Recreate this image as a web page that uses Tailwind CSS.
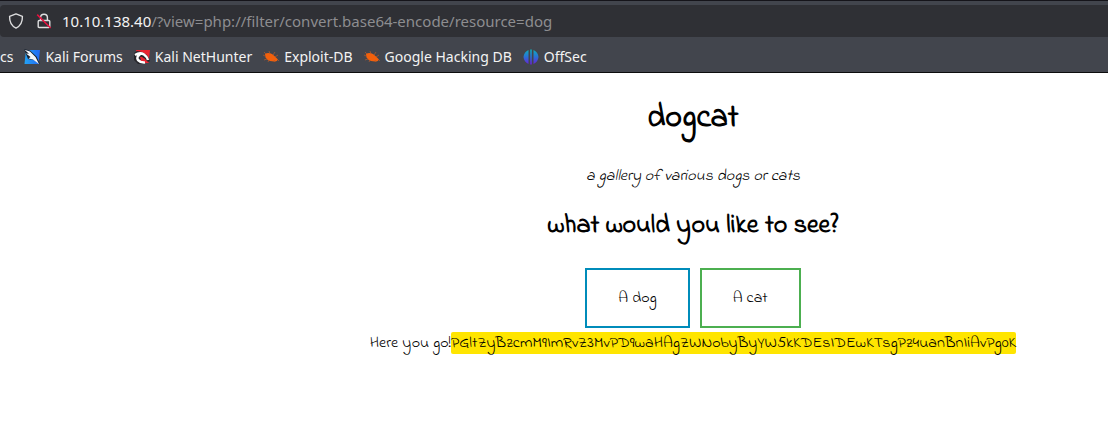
<!DOCTYPE html>
<html lang="en">
<head>
<meta charset="utf-8">
<title>dogcat</title>
<script src="https://cdn.jsdelivr.net/npm/@tailwindcss/browser@4"></script>
</head>
<body class="min-h-screen bg-white text-black">
<header class="border-y border-[#0c0c0d] border-t-[#15141a] bg-[#42454d] pt-1 font-['Noto_Sans',sans-serif]">
  <form class="flex h-8 items-center rounded-l bg-[#2f3035] pl-2">
    <svg class="size-4 shrink-0" viewBox="0 0 16 16" fill="none" stroke="#dededf" stroke-width="1.4" stroke-linejoin="round" aria-hidden="true"><path d="M8 .9 14.4 3.4C14.6 8.5 12.4 13 8 15.1 3.6 13 1.4 8.5 1.6 3.4Z"/></svg>
    <svg class="ml-3 size-4 shrink-0" viewBox="0 0 16 16" fill="none" stroke-width="1.4" aria-hidden="true"><path stroke="#dededf" d="M4.6 7.5V4.6a3.4 3.4 0 0 1 6.8 0v2.9M3.2 7.5h9.6q1 0 1 1v5q0 1-1 1H3.2q-1 0-1-1v-5q0-1 1-1Z"/><path stroke="#e8113f" stroke-width="1.5" d="M1.2 1.6 14.6 15"/></svg>
    <div role="textbox" aria-label="Address" tabindex="0" class="ml-2.5 whitespace-nowrap text-[15px] leading-5 text-[#8d8d90]"><span class="text-[#f3f3f3]">10.10.138.40</span>/?view=php://filter/convert.base64-encode/resource=dog</div>
  </form>
  <nav aria-label="Bookmarks" class="flex h-[35px] items-center gap-[11px] whitespace-nowrap pt-1 text-sm text-[#f3f3f3]">
    <a href="#">cs</a>
    <a href="#" class="flex items-center gap-[5px]">
      <svg class="size-4" viewBox="0 0 16 16" aria-hidden="true"><defs><linearGradient id="kf" x2="1"><stop stop-color="#23a4f5"/><stop offset="1" stop-color="#2268f2"/></linearGradient></defs><path fill="url(#kf)" d="M2 1h14l-1.5 14H.5Z"/><path fill="#17212e" d="M0 0 6 1.5l6.5 6L16 15l-6-4-6-1Z"/><path fill="#f4f7fa" d="m.5 .8 5.5 1.7L11.5 8l3.5 7L9 10.5 4.5 9.5l2-1.5L2 4.5l3 .3Z"/></svg>Kali Forums</a>
    <a href="#" class="flex items-center gap-[5px]">
      <svg class="size-4" viewBox="0 0 16 16" aria-hidden="true"><path fill="#e8222f" d="M2 1h14l-1.5 13H5Z"/><path fill="#26262b" d="M0 4 3 2l5 1 5 3 3 6-2 1-4-4-4 3 5 1v2H4L0 11Z"/><path fill="none" stroke="#fff" stroke-width="2.5" d="M1 6Q6 3 10 5.5q3 2 4 5.5M6 5.500Q2 8 4 11q3 3 7 2.500"/><path fill="#e8222f" d="M6 8q3-1 5 4l-4-.5Z"/></svg>Kali NetHunter</a>
    <a href="#" class="flex items-center gap-[5px]">
      <svg class="size-4" viewBox="0 0 16 16" aria-hidden="true"><path fill="#f2600c" d="M2 5Q5 3 9 5l3 2.500 3 3q-1 2.500-4 2L7 12Q4 11 2.500 8.500Z"/><path fill="none" stroke="#b85a2a" stroke-width=".7" d="m2 7-2-1m3-1L1 3m6 2L6 2m4 4 2-3m0 5 3-2M4 10l-3 1m5 0-1 2m6-2 1 2m2-3 2 2"/></svg>Exploit-DB</a>
    <a href="#" class="flex items-center gap-[5px]">
      <svg class="size-4" viewBox="0 0 16 16" aria-hidden="true"><path fill="#f2600c" d="M2 5Q5 3 9 5l3 2.500 3 3q-1 2.500-4 2L7 12Q4 11 2.500 8.500Z"/><path fill="none" stroke="#b85a2a" stroke-width=".7" d="m2 7-2-1m3-1L1 3m6 2L6 2m4 4 2-3m0 5 3-2M4 10l-3 1m5 0-1 2m6-2 1 2m2-3 2 2"/></svg>Google Hacking DB</a>
    <a href="#" class="flex items-center gap-[5px]">
      <svg class="size-4" viewBox="0 0 16 16" aria-hidden="true"><defs><linearGradient id="os" x2="0" y2="1"><stop stop-color="#0bb1bd"/><stop offset=".5" stop-color="#2b6fd6"/><stop offset="1" stop-color="#6a1fd8"/></linearGradient></defs><path fill="url(#os)" d="M5.5 1v14Q1 13 .5 8 1 3 5.500 1ZM7.2.5h1.6v15H7.200ZM10.5 1Q15 3 15.5 8 15 13 10.500 15Z"/></svg>OffSec</a>
  </nav>
</header>
<main class="pl-[278px] pt-6 text-center font-['Indie_Flower','Lato',cursive] text-base">
  <h1 class="text-[32px] font-bold leading-11">dogcat</h1>
  <p class="mt-[23px] italic leading-6">a gallery of various dogs or cats</p>
  <h2 class="mt-5 text-[26px] font-bold leading-9">what would you like to see?</h2>
  <div class="mt-6 flex justify-center gap-2.5">
    <button type="button" class="h-[60px] border-2 border-[#008cba] px-[31px]">A dog</button>
    <button type="button" class="h-[60px] border-2 border-[#4caf50] px-[31px]">A cat</button>
  </div>
  <p class="mt-1 whitespace-nowrap leading-[22px]">Here you go!<mark class="inline-block rounded-xs bg-[#ffe500] text-black">PGltZyBzcmM9ImRvZ3MvPD9waHAgZWNobyByYW5kKDEsIDEwKTsgPz4uanBnIiAvPg0K</mark></p>
</main>
</body>
</html>
